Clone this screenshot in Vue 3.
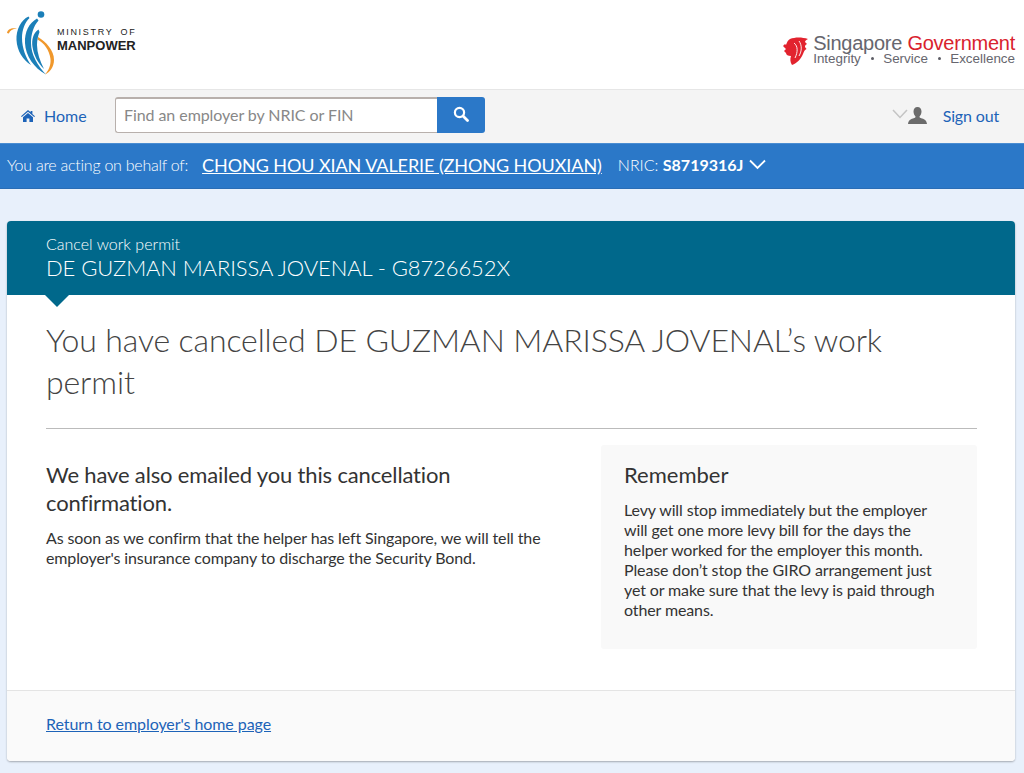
<script setup>
const remember = `Levy will stop immediately but the employer will get one more levy bill for the days the helper worked for the employer this month. Please don’t stop the GIRO arrangement just yet or make sure that the levy is paid through other means.`
</script>

<template>
  <div class="page">
    <header class="masthead">
      <div class="mom">
        <svg class="mom__mark" width="56" height="76" viewBox="0 0 56 76">
          <path d="M7 33 C7.5 29.5 11 27.5 17 28.5 C12.5 29 10 30.5 8.8 33.5 Z" fill="#f0982c" />
          <path d="M38 37 C46 42 54 50 54 60 C54 67 50 72 45 74.5 C49 70 51 65 50.5 59 C49.5 50 44 43 37.5 39.5 Z" fill="#f0982c" />
          <path d="M28.5 16.5 C21 20 16 30 16.5 40 C17 51 23 60 31 65 C26 58 22 48 22 38 C22 30 25 22 29.5 18 Z" fill="#1b7fb8" />
          <path d="M37 18.5 C29 23 24.5 32 25 43 C25.5 56 34 68 46 74.5 C38 66 31 55 31 43 C31 34 33.5 26 38.5 20.5 Z" fill="#1b7fb8" />
          <path d="M38.5 29.5 C33 33 31.5 40 32.5 47 C34 56 38 63 44 69 C40 61 37 53 37 45 C37 40 38 36 39.5 32 Z" fill="#1b7fb8" />
          <circle cx="41" cy="14.5" r="3.3" fill="#1b7fb8" />
        </svg>
        <div class="mom__text">
          <span class="mom__top">MINISTRY OF</span>
          <span class="mom__bottom">MANPOWER</span>
        </div>
      </div>
      <div class="gov">
        <svg class="gov__lion" width="25" height="29" viewBox="0 0 25 29">
          <path d="M7 2 C12 0 19 0 25 2 C23 3 22 4 22 5 L24 7 C22 8 22 9 22 10 L23.5 12 C21 13 21 15 20 17 C18 22 14 26 9 28 C7 25 7 22 8 19 C5 19 3 18 3 16 L1 14 L3 12 L0 9 L2 7 L3 8 C4 5 5 3 7 2 Z" fill="#e2232e" />
          <path d="M11 6 C15 9 15 15 12 21 M16 4 C19 8 19 14 16 19" fill="none" stroke="#fff" stroke-width="0.9" />
        </svg>
        <div class="gov__text">
          <div class="gov__name">Singapore <span class="gov__red">Government</span></div>
          <div class="gov__motto">
            <span>Integrity</span><i></i><span>Service</span><i></i><span>Excellence</span>
          </div>
        </div>
      </div>
    </header>

    <nav class="nav">
      <a class="nav__home" href="#">
        <svg width="14" height="12" viewBox="0 0 14 12">
          <path d="M7 0 L9.6 2.3 V1 H11.4 V3.9 L14 6.2 L13.2 7.1 L7 1.8 L.8 7.1 L0 6.2 Z M2 7.3 L7 3 L12 7.3 V12 H8.4 V8.6 H5.6 V12 H2 Z" fill="#1d63b8" />
        </svg>
        Home
      </a>
      <div class="search">
        <input class="search__input" type="text" placeholder="Find an employer by NRIC or FIN" />
        <button class="search__btn">
          <svg width="16" height="16" viewBox="0 0 16 16">
            <circle cx="6.5" cy="6.5" r="4.6" fill="none" stroke="#fff" stroke-width="2.2" />
            <path d="M10 10 L14.5 14.5" stroke="#fff" stroke-width="2.8" stroke-linecap="round" />
          </svg>
        </button>
      </div>
      <div class="nav__user">
        <svg class="nav__chev" width="16" height="10" viewBox="0 0 16 10">
          <path d="M1 1 L8 8.5 L15 1" fill="none" stroke="#c4c4c4" stroke-width="1.5" />
        </svg>
        <svg class="nav__person" width="19" height="17" viewBox="0 0 19 17">
          <path d="M9.5 0 C12 0 13.5 2 13.5 4.6 C13.5 6.8 12.5 8.6 11.5 9.6 C11.5 10.6 12 11 14 11.6 C17 12.5 18.5 13.5 19 17 H0 C.5 13.5 2 12.5 5 11.6 C7 11 7.5 10.6 7.5 9.6 C6.5 8.6 5.5 6.8 5.5 4.6 C5.5 2 7 0 9.5 0 Z" fill="#6b6b6b" />
        </svg>
        <a class="nav__signout" href="#">Sign out</a>
      </div>
    </nav>

    <div class="acting">
      <span class="acting__label">You are acting on behalf of:</span>
      <a class="acting__name" href="#">CHONG HOU XIAN VALERIE (ZHONG HOUXIAN)</a>
      <span class="acting__nric">NRIC: <b>S8719316J</b></span>
      <svg width="17" height="11" viewBox="0 0 17 11">
        <path d="M1 1.5 L8.5 9 L16 1.5" fill="none" stroke="#fff" stroke-width="1.8" />
      </svg>
    </div>

    <main class="card">
      <div class="card__head">
        <div class="card__sub">Cancel work permit</div>
        <div class="card__person">DE GUZMAN MARISSA JOVENAL - G8726652X</div>
        <span class="card__notch"></span>
      </div>
      <div class="card__body">
        <h1 class="title">You have cancelled DE GUZMAN MARISSA JOVENAL’s work permit</h1>
        <div class="columns">
          <div class="columns__left">
            <h2 class="confirm">We have also emailed you this cancellation confirmation.</h2>
            <p class="copy">As soon as we confirm that the helper has left Singapore, we will tell the employer's insurance company to discharge the Security Bond.</p>
          </div>
          <aside class="note">
            <h3 class="note__title">Remember</h3>
            <p class="copy">{{ remember }}</p>
          </aside>
        </div>
      </div>
      <div class="card__foot">
        <a href="#">Return to employer's home page</a>
      </div>
    </main>
  </div>
</template>

<style>
html,
body {
  margin: 0;
  background: #e8f0fb;
}
</style>

<style scoped>
.page {
  height: 773px;
  overflow: hidden;
  background: #e8f0fb;
  font-family: Lato, sans-serif;
  color: #333;
}
.masthead {
  height: 89px;
  background: #fff;
  border-bottom: 1px solid #e6e6e6;
  display: flex;
  justify-content: space-between;
  padding: 0 9px 0 0;
}
.mom {
  display: flex;
  gap: 1px;
}
.mom__text {
  display: flex;
  flex-direction: column;
  padding-top: 27px;
  font-family: "Liberation Sans", sans-serif;
  color: #222;
}
.mom__top {
  font-size: 9px;
  line-height: 11px;
  letter-spacing: 1.7px;
  word-spacing: 3px;
}
.mom__bottom {
  font-size: 13px;
  line-height: 15px;
  font-weight: 700;
}
.gov {
  display: flex;
  gap: 5px;
  padding-top: 34px;
}
.gov__lion {
  margin-top: 3px;
}
.gov__text {
  font-family: "Liberation Sans", sans-serif;
  color: #66666e;
}
.gov__name {
  font-size: 20px;
  line-height: 18px;
  letter-spacing: -0.25px;
}
.gov__red {
  color: #d9222e;
}
.gov__motto {
  display: flex;
  align-items: center;
  justify-content: space-between;
  font-size: 13.4px;
  line-height: 13px;
}
.gov__motto i {
  width: 3px;
  height: 3px;
  border-radius: 50%;
  background: #5c5c64;
}
.nav {
  height: 53px;
  box-sizing: border-box;
  background: #f4f4f4;
  display: flex;
  align-items: flex-start;
  padding: 7px 25px 0 21px;
}
.nav__home {
  display: flex;
  align-items: center;
  gap: 9px;
  width: 94px;
  height: 37px;
  box-sizing: border-box;
  color: #1d63b8;
  font-size: 16px;
  text-decoration: none;
}
.search {
  display: flex;
  height: 36px;
}
.search__input {
  width: 322px;
  height: 36px;
  box-sizing: border-box;
  padding: 0 8px 2px;
  background: #fff;
  border: 1px solid #b8b0ac;
  border-top-width: 2px;
  border-right: none;
  border-radius: 3px 0 0 3px;
  font-family: Lato, sans-serif;
  font-size: 16px;
  letter-spacing: -0.07px;
  outline: none;
}
.search__input::placeholder {
  color: #888;
  opacity: 1;
}
.search__btn {
  width: 48px;
  height: 36px;
  padding: 0 0 3px;
  background: #2b78c8;
  border: none;
  border-radius: 0 3px 3px 0;
  display: flex;
  align-items: center;
  justify-content: center;
}
.nav__user {
  margin-left: auto;
  display: flex;
  align-items: center;
  height: 37px;
}
.nav__chev {
  margin-bottom: 3px;
}
.nav__signout {
  margin-left: 16px;
  color: #1d63b8;
  font-size: 16px;
  letter-spacing: -0.15px;
  text-decoration: none;
}
.acting {
  height: 46px;
  box-sizing: border-box;
  background: #2b78c8;
  border-top: 1px solid #4a8dd2;
  border-bottom: 1px solid #2a6db5;
  display: flex;
  align-items: center;
  padding: 0 0 3px 7px;
  color: #fff;
}
.acting__label {
  font-size: 16px;
  font-weight: 300;
  letter-spacing: -0.25px;
}
.acting__name {
  margin-left: 14px;
  font-size: 18px;
  letter-spacing: -0.08px;
  color: #fff;
}
.acting__nric {
  margin: 0 6px 0 16px;
  font-size: 16px;
  font-weight: 300;
}
.acting__nric b {
  font-weight: 700;
}
.card {
  margin: 32px 9px 0 7px;
  height: 540px;
  display: flex;
  flex-direction: column;
  background: #fff;
  border-radius: 4px;
  box-shadow: 0 1px 2px rgba(0, 0, 0, 0.3);
}
.card__head {
  position: relative;
  height: 74px;
  box-sizing: border-box;
  padding: 13px 39px 0;
  background: #00688b;
  border-radius: 4px 4px 0 0;
  color: #fff;
}
.card__sub {
  font-size: 16px;
  line-height: 19px;
  font-weight: 300;
}
.card__person {
  margin-top: 1px;
  font-size: 22px;
  line-height: 28px;
  letter-spacing: -0.1px;
  font-weight: 300;
}
.card__notch {
  position: absolute;
  left: 38px;
  top: 74px;
  border-left: 12px solid transparent;
  border-right: 12px solid transparent;
  border-top: 12px solid #00688b;
}
.card__body {
  flex: 1;
  padding: 24px 38px 0 39px;
}
.title {
  margin: 0;
  padding-bottom: 25px;
  border-bottom: 1px solid #bbb;
  font-size: 32px;
  line-height: 42px;
  letter-spacing: -0.12px;
  font-weight: 300;
  color: #444;
}
.columns {
  display: flex;
  justify-content: space-between;
  margin-top: 16px;
}
.columns__left {
  width: 510px;
}
.confirm {
  margin: 16px 0 0;
  font-size: 22px;
  line-height: 28px;
  letter-spacing: -0.15px;
  font-weight: 400;
}
.copy {
  margin: 11px 0 0;
  font-size: 16px;
  line-height: 20px;
  letter-spacing: -0.12px;
}
.note {
  width: 376px;
  height: 204px;
  box-sizing: border-box;
  padding: 16px 24px 0 23px;
  background: #f9f9f9;
  border-radius: 3px;
}
.note__title {
  margin: 0;
  font-size: 22px;
  line-height: 28px;
  font-weight: 400;
}
.note .copy {
  margin-top: 11px;
}
.card__foot {
  height: 71px;
  box-sizing: border-box;
  padding: 23px 39px 0;
  background: #fafafa;
  border-top: 1px solid #e4e4e4;
  border-radius: 0 0 4px 4px;
  font-size: 16px;
  letter-spacing: -0.07px;
}
.card__foot a {
  color: #1d63b8;
}
</style>
